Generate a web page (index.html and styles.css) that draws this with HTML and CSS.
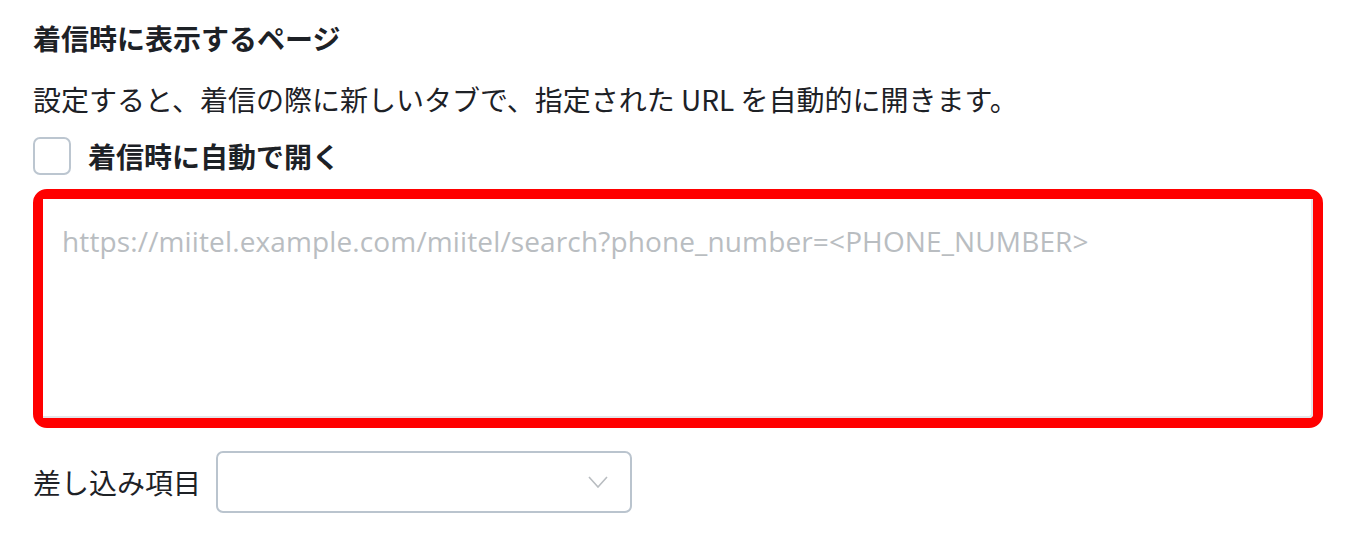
FILE: index.html
```html
<!DOCTYPE html>
<html lang="ja">
<head>
<meta charset="utf-8">
<link rel="stylesheet" href="styles.css">
</head>
<body>
<section class="panel">
  <h2 class="title">着信時に表示するページ</h2>
  <p class="desc">設定すると、着信の際に新しいタブで、指定された URL を自動的に開きます。</p>
  <label class="check-row">
    <span class="checkbox"></span>
    <span class="check-label">着信時に自動で開く</span>
  </label>
  <div class="highlight">
    <textarea class="url-input" placeholder="https://miitel.example.com/miitel/search?phone_number=&lt;PHONE_NUMBER&gt;"></textarea>
  </div>
  <div class="insert-row">
    <span class="insert-label">差し込み項目</span>
    <div class="select">
      <svg class="chevron" width="20" height="12" viewBox="0 0 20 12"><path d="M1 1 L10 11 L19 1" fill="none" stroke="#b9bdc1" stroke-width="1.6"/></svg>
    </div>
  </div>
</section>
</body>
</html>
```

FILE: styles.css
```css
html, body {
  margin: 0;
  padding: 0;
  background: #ffffff;
}
body {
  font-family: "Noto Sans CJK JP", "Noto Sans", sans-serif;
  color: #1d2126;
}
.panel {
  padding: 18px 0 0 33px;
}
.title {
  margin: 0;
  font-size: 28px;
  font-weight: 700;
  line-height: 40px;
}
.desc {
  margin: 21px 0 0;
  font-size: 28px;
  line-height: 40px;
  font-weight: 400;
}
.check-row {
  display: flex;
  align-items: center;
  gap: 17px;
  margin-top: 18px;
  height: 38px;
}
.checkbox {
  width: 38px;
  height: 38px;
  box-sizing: border-box;
  border: 2px solid #bcc6d0;
  border-radius: 7px;
  background: #fff;
}
.check-label {
  font-size: 28px;
  font-weight: 700;
  line-height: 38px;
}
.highlight {
  margin-top: 14px;
  width: 1290px;
  height: 239px;
  box-sizing: border-box;
  border: 10px solid #ff0000;
  border-radius: 14px;
  display: flex;
}
.url-input {
  flex: 1;
  margin: 0;
  box-sizing: border-box;
  border: none;
  border-right: 2px solid #e3e5e9;
  border-bottom: 2px solid #e3e5e9;
  border-radius: 0 0 4px 0;
  resize: none;
  outline: none;
  padding: 22px 19px;
  font-family: "Open Sans", "Noto Sans", sans-serif;
  font-size: 28px;
  letter-spacing: 0.13px;
  line-height: 40px;
  color: #1d2126;
  background: #fff;
}
.url-input::placeholder {
  color: #b9bdc1;
}
.insert-row {
  display: flex;
  align-items: center;
  gap: 15px;
  margin-top: 23px;
}
.insert-label {
  font-size: 28px;
  line-height: 40px;
}
.select {
  width: 416px;
  height: 62px;
  box-sizing: border-box;
  border: 2px solid #bac4ce;
  border-radius: 7px;
  display: flex;
  align-items: center;
  justify-content: flex-end;
  padding-right: 22px;
}
.chevron {
  display: block;
}
```
